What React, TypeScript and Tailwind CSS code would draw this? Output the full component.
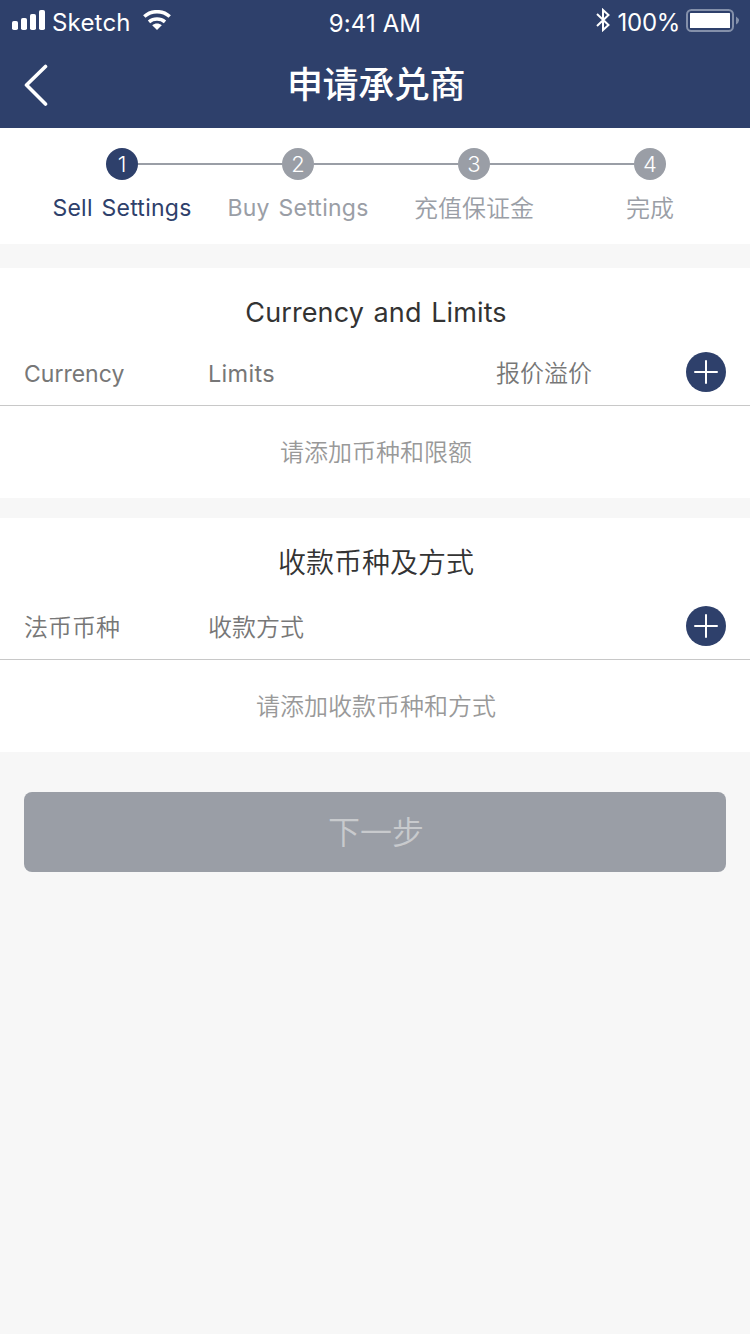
import React from "react";

const steps = ["Sell Settings", "Buy Settings", "充值保证金", "完成"];

function StatusBar() {
  return (
    <div className="grid h-10 grid-cols-3 font-['Inter','Noto_Sans_CJK_SC',sans-serif] text-[24px] font-normal leading-10 text-white">
      <div className="flex items-start pl-3">
        <svg width="34" height="20" viewBox="0 0 34 20" fill="white" className="mt-[10px] shrink-0">
          <rect x="0" y="11" width="6" height="9" rx="1.8" />
          <rect x="9" y="8" width="6" height="12" rx="1.8" />
          <rect x="18" y="4" width="6" height="16" rx="1.8" />
          <rect x="27" y="0" width="6" height="20" rx="1.8" />
        </svg>
        <span className="ml-[6px] mt-[3px] w-[78px] tracking-[0.2px]">Sketch</span>
        <svg width="28" height="20" viewBox="0 0 28 20" fill="none" stroke="white" strokeWidth="3.6" className="ml-[13px] mt-[10px] shrink-0">
          <path d="M1.300 6.500C8.500 0.100 19.500 0.100 26.700 6.500" />
          <path d="M6 11.800C10.600 8 17.400 8 22 11.800" />
          <path d="M9.200 15.200C12 13 16 13 18.800 15.200L14 20Z" fill="white" stroke="none" />
        </svg>
      </div>
      <div className="mt-1 text-center tracking-[0.1px]">9:41 AM</div>
      <div className="flex items-start justify-end pr-[11px]">
        <svg width="14" height="24" viewBox="0 0 14 24" fill="none" stroke="white" strokeWidth="2" className="mt-2">
          <path d="M1 6L12.500 17L7 22V2L12.500 7L1 18" />
        </svg>
        <span className="ml-2 mt-[3px] tracking-[-0.3px]">100%</span>
        <svg width="53" height="23" viewBox="0 0 53 23" className="ml-[6px] mt-[9px] shrink-0">
          <rect x="1" y="1" width="46" height="21" rx="4.500" fill="none" stroke="#8490aa" strokeWidth="2" />
          <rect x="4" y="4" width="40" height="15" rx="0.500" fill="white" />
          <path d="M50 7.500Q56 11.500 50 15.500Z" fill="#8490aa" />
        </svg>
      </div>
    </div>
  );
}

function Stepper() {
  return (
    <section className="h-[116px] shrink-0 bg-white px-[34px] pt-5">
      <ol className="grid w-[704px] grid-cols-4">
        {steps.map((label, i) => (
          <li key={label} className={i === 0 ? "text-[#2e406b]" : "text-[#9a9ea6]"}>
            <div className="flex items-center">
              <span className={i === 0 ? "h-0.5 flex-1" : "h-0.5 flex-1 bg-[#9a9ea6]"} />
              <span className={i === 0 ? "flex size-8 items-center justify-center rounded-full bg-[#2e406b] text-[22px] text-white" : "flex size-8 items-center justify-center rounded-full bg-[#9a9ea6] text-[22px] text-white"}>
                {i + 1}
              </span>
              <span className={i === 3 ? "h-0.5 flex-1" : "h-0.5 flex-1 bg-[#9a9ea6]"} />
            </div>
            <div className={i < 2 ? "mt-[10px] whitespace-nowrap text-center text-[23px] font-normal leading-9 tracking-[0.25px] [word-spacing:2px]" : "mt-[11px] whitespace-nowrap text-center text-[24px] leading-9"}>{label}</div>
          </li>
        ))}
      </ol>
    </section>
  );
}

type Cell = { text: string; className: string };
type PanelProps = { title: Cell; columns: Cell[]; empty: string; rowClass: string };

function Panel({ title, columns, empty, rowClass }: PanelProps) {
  return (
    <section className="shrink-0 bg-white pt-6">
      <h2 className={title.className}>{title.text}</h2>
      <div className={rowClass}>
        {columns.map((c, i) => (
          <span key={i} className={c.className}>{c.text}</span>
        ))}
        <button className="flex size-10 items-center justify-center rounded-full bg-[#2e406b]" aria-label="Add">
          <svg width="24" height="24" viewBox="0 0 24 24" stroke="white" strokeWidth="2" strokeLinecap="round">
            <path d="M12 1V23M1 12H23" />
          </svg>
        </button>
      </div>
      <p className="h-[92px] pl-0.5 pt-px text-center text-[24px] leading-[92px] text-[#999]">{empty}</p>
    </section>
  );
}

export default function App() {
  return (
    <div className="flex h-[1334px] w-[750px] flex-col bg-[#f7f7f7] font-['Inter','Noto_Sans_CJK_SC',sans-serif] font-[350]">
      <header className="h-32 shrink-0 bg-[#2e406b] text-white">
        <StatusBar />
        <div className="flex h-[88px] items-center px-6">
          <svg width="24" height="42" viewBox="0 0 24 42" fill="none" stroke="white" strokeWidth="3.600" strokeLinecap="round" strokeLinejoin="round" className="mt-[2px]">
            <path d="M21.500 2.500L2.500 21L21.500 40" />
          </svg>
          <h1 className="mt-px flex-1 pr-[22px] text-center text-[36px] font-medium tracking-[-0.4px]">申请承兑商</h1>
        </div>
      </header>
      <Stepper />
      <div className="mt-6">
        <Panel
          title={{ text: "Currency and Limits", className: "pl-0.5 pt-px text-center text-[27px] font-normal leading-10 tracking-[0.1px] text-[#333] [word-spacing:2px]" }}
          columns={[
            { text: "Currency", className: "pt-0.5 text-[23px] font-normal" },
            { text: "Limits", className: "pt-0.5 text-[23.500px] font-normal tracking-[0.3px]" },
            { text: "报价溢价", className: "pt-0.5" },
          ]}
          empty="请添加币种和限额"
          rowClass="mt-[19px] grid h-[54px] grid-cols-[184px_288px_1fr_40px] border-b border-[#c8c8c8] px-6 text-[24px] leading-10 text-[#777]"
        />
      </div>
      <div className="mt-5">
        <Panel
          title={{ text: "收款币种及方式", className: "pl-0.5 pt-px text-center text-[28px] leading-10 text-[#333]" }}
          columns={[
            { text: "法币币种", className: "pt-0.5" },
            { text: "收款方式", className: "pt-0.5" },
            { text: "", className: "" },
          ]}
          empty="请添加收款币种和方式"
          rowClass="mt-[23px] grid h-[54px] grid-cols-[184px_288px_1fr_40px] border-b border-[#c8c8c8] px-6 text-[24px] leading-10 text-[#777]"
        />
      </div>
      <button className="mx-6 mt-10 h-20 shrink-0 rounded-lg bg-[#9a9ea6] pl-0.5 pt-0.5 text-[32px] text-[#c8cacd]">下一步</button>
    </div>
  );
}
